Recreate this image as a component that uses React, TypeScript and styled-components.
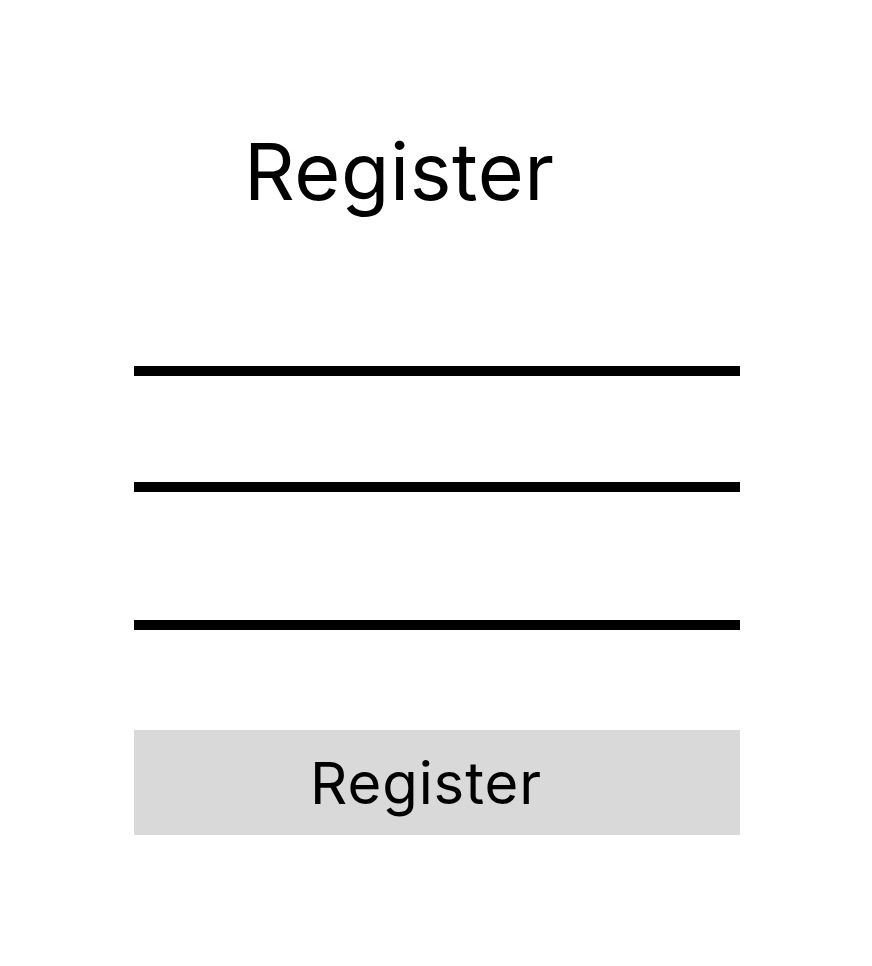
import React from "react";
import styled, { createGlobalStyle } from "styled-components";

const GlobalStyle = createGlobalStyle`
  html, body {
    margin: 0;
    padding: 0;
    background: #ffffff;
  }
  body {
    font-family: Inter, "Noto Sans", sans-serif;
    color: #000000;
  }
`;

export default function App() {
  return (
    <>
      <GlobalStyle />
      <Page>
        <Title>Register</Title>
        <Form onSubmit={(e) => e.preventDefault()}>
          <Field type="text" aria-label="Username" $height={92} />
          <Field type="email" aria-label="Email" $height={116} />
          <Field type="password" aria-label="Password" $height={138} />
          <SubmitButton type="submit">Register</SubmitButton>
        </Form>
      </Page>
    </>
  );
}

const Page = styled.div`
  width: 100%;
  min-height: 966px;
  box-sizing: border-box;
  padding: 132px 132px 0 134px;
  display: flex;
  flex-direction: column;
`;

const Title = styled.h1`
  margin: 0 0 0 110px;
  font-size: 79px;
  font-weight: 400;
  line-height: 78px;
  letter-spacing: 0.6px;
`;

const Form = styled.form`
  display: flex;
  flex-direction: column;
  width: 606px;
  margin-top: 74px;
`;

const Field = styled.input<{ $height: number }>`
  box-sizing: border-box;
  width: 100%;
  height: ${(p) => p.$height}px;
  padding: 0;
  border: none;
  border-bottom: 10px solid #000000;
  background: transparent;
  outline: none;
  font-family: inherit;
  font-size: 32px;
`;

const SubmitButton = styled.button`
  margin-top: 100px;
  width: 100%;
  height: 105px;
  padding: 0 22px 0 0;
  border: none;
  border-radius: 0;
  background: #d9d9d9;
  color: #000000;
  font-family: Inter, "Noto Sans", sans-serif;
  font-size: 58px;
  font-weight: 400;
  letter-spacing: 0.9px;
  cursor: pointer;
`;
